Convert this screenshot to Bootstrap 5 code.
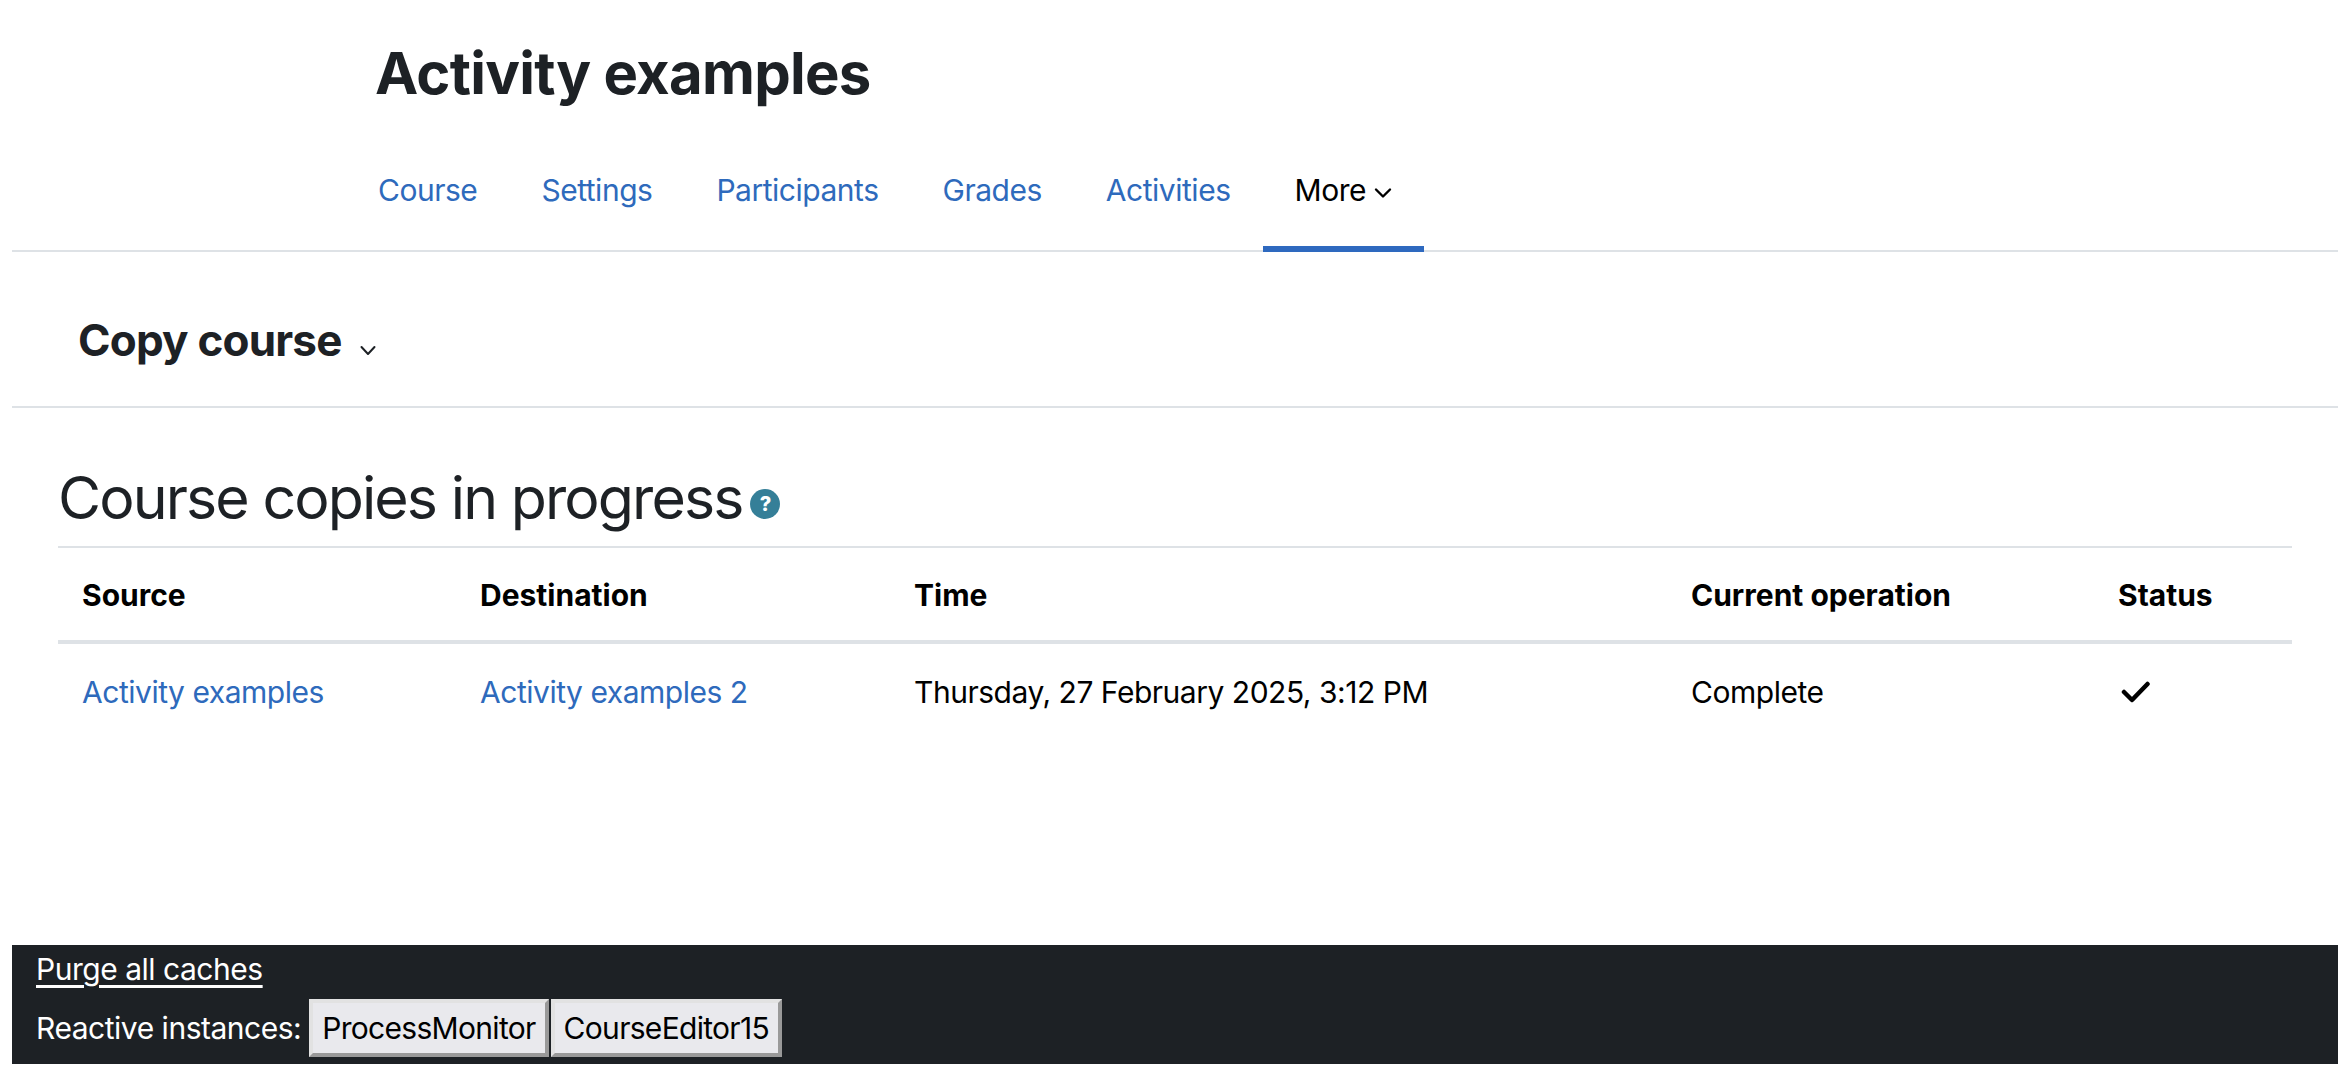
<!DOCTYPE html>
<html lang="en">
<head>
<meta charset="utf-8">
<title>Course copies in progress</title>
<link href="https://cdn.jsdelivr.net/npm/bootstrap@5.3.0/dist/css/bootstrap.min.css" rel="stylesheet">
<style>
html,body{height:100%;}
body{font-family:Inter,"Liberation Sans",sans-serif;font-size:30px;color:#000;background:#fff;line-height:1.5;letter-spacing:-.48px;}
a{color:#2e6abc;text-decoration:none;}
.page-wrap{margin:0 14px 16px 12px;height:1064px;display:flex;flex-direction:column;}
.title-row{padding:37px 0 0 363px;height:146px;}
.title-row h1{font-size:58px;font-weight:700;color:#1d2125;margin:0;line-height:72px;letter-spacing:-.7px;}
.tabs-row{border-bottom:2px solid #dee2e6;padding-left:334px;height:106px;}
.tabs-row .nav-link{padding:0 32px;height:104px;line-height:88px;color:#2e6abc;font-size:30px;position:relative;}
.tabs-row .nav-link.is-current{color:#000;}
.tabs-row .nav-link.is-current::after{content:"";position:absolute;left:0;right:0;bottom:-2px;height:6px;background:#2e69bf;}
.tabs-row svg{width:18px;height:12px;margin-left:8px;vertical-align:2px;}
.tertiary{height:156px;border-bottom:2px solid #dee2e6;padding-left:66px;padding-top:56px;}
.tertiary h2{font-size:44px;font-weight:700;color:#1d2125;margin:0;line-height:64px;letter-spacing:-.8px;}
.tertiary svg{width:16px;height:11px;margin-left:18px;vertical-align:0;}
.content{padding:0 46px;flex:1 1 auto;}
.copies-title{font-size:59px;font-weight:400;color:#1d2125;margin:0;padding-top:42px;height:138px;line-height:76px;display:flex;align-items:center;gap:8px;letter-spacing:-1.9px;}
.help-dot{width:30px;height:30px;border-radius:50%;background:#357f98;color:#fff;font-size:20px;font-weight:800;line-height:30px;text-align:center;display:inline-block;margin-top:12px;letter-spacing:0;}
.copies-table{table-layout:fixed;width:2234px;margin:0;font-size:30px;border-top:2px solid #dee2e6;}
.copies-table>thead>tr>th{padding:25px 24px 23px;height:95px;line-height:44px;border-bottom:4px solid #dee2e6;font-weight:700;color:#000;vertical-align:middle;letter-spacing:0;}
.copies-table>tbody>tr>td{padding:25px 24px 23px;height:96px;line-height:44px;border-bottom:0;color:#000;vertical-align:middle;}
.w-src{width:398px;}.w-dst{width:434px;}.w-time{width:777px;}.w-op{width:427px;}.w-status{width:198px;}
.tick{width:30px;height:22px;display:block;margin-left:3px;}
.dev-foot{background:#1d2125;color:#fff;height:119px;padding:0 24px;flex:0 0 auto;font-size:30px;}
.dev-foot a{color:#fff;text-decoration:underline;text-underline-offset:5px;}
.purge{line-height:48px;height:50px;}
.inst-row{display:flex;align-items:center;gap:8px;margin-top:4px;}
.inst-btns{display:flex;gap:2px;}
.inst-btn{font:inherit;font-size:30px;line-height:42px;height:58px;padding:4px 9px;background:#e9e9ed;color:#000;border:4px solid;border-color:#e2e2e2 #999 #999 #e2e2e2;border-radius:0;letter-spacing:-.7px;}
</style>
</head>
<body>
<div class="page-wrap">
  <div class="title-row"><h1>Activity examples</h1></div>
  <div class="tabs-row">
    <ul class="nav flex-nowrap">
      <li class="nav-item"><a class="nav-link" href="#">Course</a></li>
      <li class="nav-item"><a class="nav-link" href="#">Settings</a></li>
      <li class="nav-item"><a class="nav-link" href="#">Participants</a></li>
      <li class="nav-item"><a class="nav-link" href="#">Grades</a></li>
      <li class="nav-item"><a class="nav-link" href="#">Activities</a></li>
      <li class="nav-item"><a class="nav-link is-current" href="#">More<svg viewBox="0 0 18 12" fill="none" stroke="#000" stroke-width="2.4" stroke-linecap="round" stroke-linejoin="round"><path d="M2 2.5l7 7 7-7"/></svg></a></li>
    </ul>
  </div>
  <div class="tertiary">
    <h2>Copy course<svg viewBox="0 0 16 11" fill="none" stroke="#1d2125" stroke-width="2" stroke-linecap="round" stroke-linejoin="round"><path d="M1.5 2l6.500 7 6.500-7"/></svg></h2>
  </div>
  <div class="content">
    <h2 class="copies-title">Course copies in progress<span class="help-dot">?</span></h2>
    <table class="table copies-table">
      <thead>
        <tr>
          <th class="w-src">Source</th>
          <th class="w-dst">Destination</th>
          <th class="w-time">Time</th>
          <th class="w-op">Current operation</th>
          <th class="w-status">Status</th>
        </tr>
      </thead>
      <tbody>
        <tr>
          <td><a href="#">Activity examples</a></td>
          <td><a href="#">Activity examples 2</a></td>
          <td>Thursday, 27 February 2025, 3:12 PM</td>
          <td>Complete</td>
          <td><svg class="tick" viewBox="0 0 30 22" fill="none" stroke="#000" stroke-width="4.500" stroke-linecap="round" stroke-linejoin="round"><path d="M3 11l8 8L26.500 3"/></svg></td>
        </tr>
      </tbody>
    </table>
  </div>
  <div class="dev-foot">
    <div class="purge"><a href="#">Purge all caches</a></div>
    <div class="inst-row">
      <span>Reactive instances:</span>
      <div class="inst-btns">
        <button type="button" class="inst-btn">ProcessMonitor</button>
        <button type="button" class="inst-btn">CourseEditor15</button>
      </div>
    </div>
  </div>
</div>
<script src="https://cdn.jsdelivr.net/npm/bootstrap@5.3.0/dist/js/bootstrap.bundle.min.js"></script>
</body>
</html>
